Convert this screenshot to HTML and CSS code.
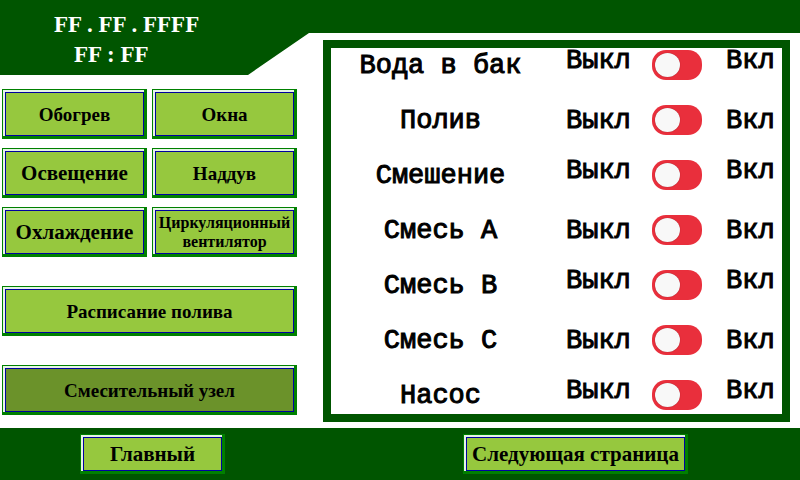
FILE: index.html
```html
<!DOCTYPE html>
<html lang="ru">
<head>
<meta charset="utf-8">
<title>Смесительный узел</title>
<link rel="stylesheet" href="styles.css">
</head>
<body>
<div class="page">
  <header class="header">
    <div class="clock">
      <time class="date">FF . FF . FFFF</time>
      <time class="time">FF : FF</time>
    </div>
  </header>

  <nav class="menu">
    <button class="key" type="button"><span class="face">Обогрев</span></button>
    <button class="key" type="button"><span class="face">Окна</span></button>
    <button class="key" type="button"><span class="face large">Освещение</span></button>
    <button class="key" type="button"><span class="face">Наддув</span></button>
    <button class="key" type="button"><span class="face large">Охлаждение</span></button>
    <button class="key" type="button"><span class="face small">Циркуляционный вентилятор</span></button>
    <button class="key wide" type="button"><span class="face">Расписание полива</span></button>
    <button class="key wide" type="button" aria-current="page"><span class="face active">Смесительный узел</span></button>
  </nav>

  <main class="panel">
    <div class="row raised"><label class="name" for="s1">Вода в бак</label><span class="state">Выкл</span><input class="switch" type="checkbox" id="s1"><span class="state">Вкл</span></div>
    <div class="row"><label class="name" for="s2">Полив</label><span class="state">Выкл</span><input class="switch" type="checkbox" id="s2"><span class="state">Вкл</span></div>
    <div class="row raised"><label class="name" for="s3">Смешение</label><span class="state">Выкл</span><input class="switch" type="checkbox" id="s3"><span class="state">Вкл</span></div>
    <div class="row"><label class="name" for="s4">Смесь А</label><span class="state">Выкл</span><input class="switch" type="checkbox" id="s4"><span class="state">Вкл</span></div>
    <div class="row raised"><label class="name" for="s5">Смесь В</label><span class="state">Выкл</span><input class="switch" type="checkbox" id="s5"><span class="state">Вкл</span></div>
    <div class="row"><label class="name" for="s6">Смесь С</label><span class="state">Выкл</span><input class="switch" type="checkbox" id="s6"><span class="state">Вкл</span></div>
    <div class="row raised"><label class="name" for="s7">Насос</label><span class="state">Выкл</span><input class="switch" type="checkbox" id="s7"><span class="state">Вкл</span></div>
  </main>

  <footer class="footer">
    <button class="key short" type="button"><span class="face large">Главный</span></button>
    <button class="key short next" type="button"><span class="face large">Следующая страница</span></button>
  </footer>
</div>
</body>
</html>
```
FILE: styles.css
```css
* {
  box-sizing: border-box;
}

body {
  margin: 0;
  background: #fff;
  color: #000;
  font-family: "Liberation Serif", "Times New Roman", serif;
}

.page {
  display: grid;
  grid-template-columns: 323px 1fr;
  grid-template-rows: 40px 35px 1fr auto;
  min-height: 100vh;
}

.header {
  grid-area: 1 / 1 / 3 / 3;
  background: #005500;
  clip-path: polygon(0 0, 100% 0, 100% 33px, 309px 33px, 248px 100%, 0 100%);
}

.clock {
  display: flex;
  flex-direction: column;
  padding: 10px 0 0 54px;
  color: #fff;
  font-size: 23px;
  font-weight: bold;
  line-height: 30px;
}

.time {
  padding-left: 20px;
}

.menu {
  grid-area: 3 / 1;
  display: grid;
  grid-template-columns: 145px 145px;
  gap: 9px 5px;
  align-content: start;
  padding: 14px 0 0 2px;
}

.key {
  display: flex;
  height: 50px;
  padding: 2px 0 0 2px;
  border: solid #008000;
  border-width: 1px 3px 3px 1px;
  background: #e6f5e6;
  color: #000;
  font: bold 19px/19px "Liberation Serif", "Times New Roman", serif;
}

.face {
  flex: 1;
  align-self: stretch;
  display: flex;
  align-items: center;
  justify-content: center;
  border: 1px solid #0000a0;
  background: #96c83e;
}

.large {
  font-size: 21px;
}

.small {
  font-size: 16px;
}

.active {
  background: #6b922a;
}

.wide {
  grid-column: 1 / 3;
  margin-top: 20px;
}

.panel {
  grid-area: 2 / 2 / 4 / 3;
  display: flex;
  flex-direction: column;
  gap: 25px;
  margin: 0 10px 6px 0;
  padding: 2px 8px 4px 6px;
  border: 8px solid #005500;
  font: 27px/32px "Liberation Mono", "Courier New", monospace;
  -webkit-text-stroke: 1px #000;
}

.row {
  display: grid;
  grid-template-columns: 1fr 64px 52px 48px;
  column-gap: 22px;
  height: 30px;
}

.name {
  text-align: center;
}

.raised .state {
  margin-top: -5px;
}

.switch {
  appearance: none;
  width: 50px;
  height: 30px;
  margin: 0;
  padding: 3px;
  border-radius: 14px;
  background: #e92f3c;
}

.switch::before {
  content: "";
  display: block;
  width: 25px;
  height: 24px;
  border-radius: 50%;
  background: #f8f8f8;
  box-shadow: 0 0 1px #8d1c24;
}

.switch:checked {
  background: #3aa83e;
}

.switch:checked::before {
  margin-left: auto;
}

.footer {
  grid-area: 4 / 1 / 5 / 3;
  display: flex;
  gap: 238px;
  padding: 6px 80px;
  background: #005500;
}

.short {
  width: 145px;
  height: 40px;
}

.next {
  width: 225px;
}
```
